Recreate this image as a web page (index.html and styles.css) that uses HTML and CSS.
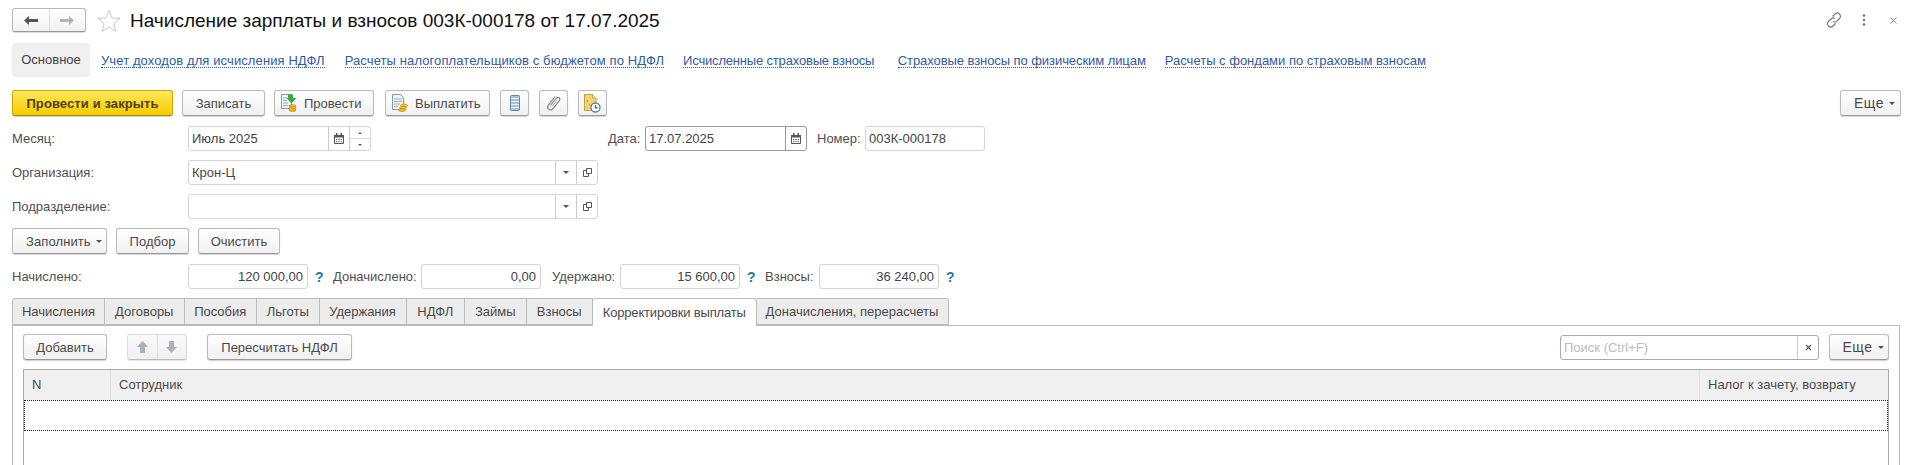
FILE: index.html
```html
<!DOCTYPE html>
<html lang="ru">
<head>
<meta charset="utf-8">
<title>Начисление зарплаты и взносов</title>
<link rel="stylesheet" href="styles.css">
</head>
<body>
<div class="page">
  <header class="header">
    <div class="nav">
      <span class="nav-cell"><svg width="14" height="9" viewBox="0 0 14 9"><path d="M0 4.500L5 0v3h9v3H5v3z" fill="#555"/></svg></span>
      <span class="nav-cell"><svg width="14" height="9" viewBox="0 0 14 9"><path d="M14 4.500L9 0v3H0v3h9v3z" fill="#b4b4b4"/></svg></span>
    </div>
    <svg class="star" width="24" height="23" viewBox="0 0 24 23"><path d="M12 1.500l3 7.400 8 .6-6.100 5.100 1.900 7.800L12 18.200l-6.800 4.200 1.900-7.800L1 9.500l8-.6z" fill="#fff" stroke="#c9c9c9"/></svg>
    <h1 class="title">Начисление зарплаты и взносов 003К-000178 от 17.07.2025</h1>
    <div class="win-icons">
      <svg width="16" height="16" viewBox="0 0 16 16"><g fill="none" stroke="#777" stroke-width="1.100"><path d="M6.500 4.500l2.500-2.500a3 3 0 0 1 4.500 4.500l-3 3a3 3 0 0 1-3.500 0"/><path d="M9.500 11.500l-2.500 2.500a3 3 0 0 1-4.500-4.500l3-3a3 3 0 0 1 3.500 0"/></g></svg>
      <svg width="4" height="12" viewBox="0 0 4 12"><g fill="#777"><circle cx="2" cy="1.500" r="1.300"/><circle cx="2" cy="6" r="1.300"/><circle cx="2" cy="10.500" r="1.300"/></g></svg>
      <svg width="7" height="7" viewBox="0 0 7 7"><path d="M.5 .5l6 6M6.500 .5l-6 6" stroke="#888"/></svg>
    </div>
  </header>

  <nav class="subnav">
    <span class="subnav-cur">Основное</span>
    <a class="link l1">Учет доходов для исчисления НДФЛ</a>
    <a class="link l2">Расчеты налогоплательщиков с бюджетом по НДФЛ</a>
    <a class="link l3">Исчисленные страховые взносы</a>
    <a class="link l4">Страховые взносы по физическим лицам</a>
    <a class="link l5">Расчеты с фондами по страховым взносам</a>
  </nav>

  <div class="toolbar">
    <button class="btn btn-primary w-post-close">Провести и закрыть</button>
    <button class="btn w-save">Записать</button>
    <button class="btn btn-icon w-post">
      <svg width="16" height="18" viewBox="0 0 16 18"><path d="M.5 .5h10v14H.5z" fill="#eef3f7" stroke="#8a9aa8"/><path d="M2 4h4M2 6.500h4M2 9h5M2 11.500h5" stroke="#9cb0c0"/><path d="M5 .5h5V4h3.500L8.500 9.500 3.500 4H5z" transform="translate(2 0)" fill="#3aa84a"/><ellipse cx="11.500" cy="12" rx="3.500" ry="1.500" fill="#f2c230" stroke="#b5891a" stroke-width=".6"/><ellipse cx="11.500" cy="14" rx="3.500" ry="1.500" fill="#f2c230" stroke="#b5891a" stroke-width=".6"/><ellipse cx="11.500" cy="16" rx="3.500" ry="1.500" fill="#eab420" stroke="#b5891a" stroke-width=".6"/></svg>
      <span>Провести</span>
    </button>
    <button class="btn btn-icon w-pay">
      <svg width="16" height="18" viewBox="0 0 16 18"><path d="M.5 .5h8l3 3v12H.5z" fill="#f2f5f8" stroke="#8a9aa8"/><path d="M2 5h8M2 7.500h8M2 10h6M2 12.500h4" stroke="#9cb0c0"/><ellipse cx="12" cy="11.500" rx="3.500" ry="1.500" fill="#f2c230" stroke="#b5891a" stroke-width=".6"/><ellipse cx="11" cy="13.800" rx="3.500" ry="1.500" fill="#f2c230" stroke="#b5891a" stroke-width=".6"/><ellipse cx="10" cy="16" rx="3.500" ry="1.500" fill="#eab420" stroke="#b5891a" stroke-width=".6"/></svg>
      <span>Выплатить</span>
    </button>
    <button class="btn w-icon gap-a">
      <svg width="10" height="16" viewBox="0 0 10 16"><rect x=".5" y=".5" width="9" height="15" rx="1" fill="#a9c3d8" stroke="#5f87a8"/><path d="M1 3.500h8M1 6.500h8M1 9.500h8M1 12.500h8" stroke="#e8f0f6" stroke-width="1.100"/></svg>
    </button>
    <button class="btn w-icon gap-b">
      <svg width="14" height="16" viewBox="0 0 14 16"><path d="M3.500 10.500l6-7.500a1.900 1.900 0 0 1 3 2.300L5.600 14a2.900 2.900 0 0 1-4.500-3.600L8.200 1.500" fill="none" stroke="#8a8a8a" stroke-width="1.200"/><path d="M5 11.500l5.500-6.800" stroke="#b5b5b5"/></svg>
    </button>
    <button class="btn w-icon gap-c">
      <svg width="17" height="19" viewBox="0 0 17 19"><path d="M.5 .5h8l3.500 3.500v12.500H.5z" fill="#f3d27a" stroke="#c89f3c"/><path d="M8.500 .5V4H12" fill="#fff6d8" stroke="#c89f3c"/><circle cx="3.500" cy="7" r=".8" fill="#b88f30"/><circle cx="6" cy="11" r=".8" fill="#b88f30"/><circle cx="11.500" cy="13.500" r="4.500" fill="#fff" stroke="#4f86b5" stroke-width="1.300"/><path d="M11.500 11v2.800h2.300" fill="none" stroke="#2f6f9f" stroke-width="1.300"/></svg>
    </button>
    <button class="btn btn-more w-more push"><span class="more-text">Еще</span><i class="caret"></i></button>
  </div>

  <div class="row row-1">
    <label class="lbl w-lbl">Месяц:</label>
    <div class="field w-month">
      <span class="val">Июль 2025</span>
      <span class="cell c21"><svg class="cal" width="10" height="11" viewBox="0 0 10 11"><path d="M.5 2.500h9v8h-9z" fill="#fff" stroke="#555"/><path d="M0 2h10v2.500H0zM2 0h1.500v2H2zM6.500 0H8v2H6.500z" fill="#555"/><path d="M2 6.500h1.300M4.300 6.500h1.300M6.700 6.500H8M2 8.700h1.300M4.300 8.700h1.300M6.700 8.700H8" stroke="#555"/></svg></span>
      <span class="spin"><span class="spin-up"><i class="tri-up"></i></span><span class="spin-down"><i class="tri-down"></i></span></span>
    </div>
    <label class="lbl date-lbl">Дата:</label>
    <div class="field field-active w-date">
      <span class="val">17.07.2025</span>
      <span class="cell c21 dark"><svg class="cal" width="10" height="11" viewBox="0 0 10 11"><path d="M.5 2.500h9v8h-9z" fill="#fff" stroke="#555"/><path d="M0 2h10v2.500H0zM2 0h1.500v2H2zM6.500 0H8v2H6.500z" fill="#555"/><path d="M2 6.500h1.300M4.300 6.500h1.300M6.700 6.500H8M2 8.700h1.300M4.300 8.700h1.300M6.700 8.700H8" stroke="#555"/></svg></span>
    </div>
    <label class="lbl num-lbl">Номер:</label>
    <div class="field w-num"><span class="val">003К-000178</span></div>
  </div>

  <div class="row row-2">
    <label class="lbl w-lbl">Организация:</label>
    <div class="field w-ref">
      <span class="val val-tight">Крон-Ц</span>
      <span class="cell c21"><i class="tri-down"></i></span>
      <span class="cell c21"><svg width="9" height="9" viewBox="0 0 9 9"><path d="M3.500 .5h5v5h-5z" fill="#fff" stroke="#555"/><path d="M3.500 2.500h-3v6h5V5.500" fill="none" stroke="#555"/></svg></span>
    </div>
  </div>

  <div class="row row-2">
    <label class="lbl w-lbl">Подразделение:</label>
    <div class="field w-ref">
      <span class="val val-tight"></span>
      <span class="cell c21"><i class="tri-down"></i></span>
      <span class="cell c21"><svg width="9" height="9" viewBox="0 0 9 9"><path d="M3.500 .5h5v5h-5z" fill="#fff" stroke="#555"/><path d="M3.500 2.500h-3v6h5V5.500" fill="none" stroke="#555"/></svg></span>
    </div>
  </div>

  <div class="toolbar toolbar-fill">
    <button class="btn btn-fill w-fill"><span class="fill-text">Заполнить</span><i class="caret"></i></button>
    <button class="btn w-pick">Подбор</button>
    <button class="btn w-clear">Очистить</button>
  </div>

  <div class="row row-totals">
    <label class="lbl w-lbl">Начислено:</label>
    <div class="field w-sum"><span class="val num">120 000,00</span></div>
    <a class="help">?</a>
    <label class="lbl lbl-don">Доначислено:</label>
    <div class="field w-sum"><span class="val num">0,00</span></div>
    <label class="lbl lbl-ud">Удержано:</label>
    <div class="field w-sum"><span class="val num">15 600,00</span></div>
    <a class="help">?</a>
    <label class="lbl lbl-vz">Взносы:</label>
    <div class="field w-sum"><span class="val num">36 240,00</span></div>
    <a class="help">?</a>
  </div>

  <div class="tabs">
    <span class="tab t1">Начисления</span>
    <span class="tab t2">Договоры</span>
    <span class="tab t3">Пособия</span>
    <span class="tab t4">Льготы</span>
    <span class="tab t5">Удержания</span>
    <span class="tab t6">НДФЛ</span>
    <span class="tab t7">Займы</span>
    <span class="tab t8">Взносы</span>
    <span class="tab tab-active t9">Корректировки выплаты</span>
    <span class="tab t10">Доначисления, перерасчеты</span>
  </div>

  <section class="panel">
    <div class="panel-bar">
      <button class="btn w-add">Добавить</button>
      <div class="btn-group">
        <span class="group-cell"><svg width="11" height="12" viewBox="0 0 11 12"><path d="M5.500 0L11 6H8v6H3V6H0z" fill="#a9b2b8"/></svg></span>
        <span class="group-cell"><svg width="11" height="12" viewBox="0 0 11 12"><path d="M5.500 12L11 6H8V0H3v6H0z" fill="#a9b2b8"/></svg></span>
      </div>
      <button class="btn w-recalc">Пересчитать НДФЛ</button>
      <div class="search">
        <span class="search-input">Поиск (Ctrl+F)</span>
        <span class="search-x"><svg width="7" height="7" viewBox="0 0 7 7"><path d="M1 1l5 5M6 1L1 6" stroke="#555" stroke-width="1.100"/></svg></span>
      </div>
      <button class="btn btn-more w-more2"><span class="more-text">Еще</span><i class="caret"></i></button>
    </div>
    <div class="grid">
      <div class="grid-head">
        <span class="col col-n">N</span>
        <span class="col col-emp">Сотрудник</span>
        <span class="col col-tax">Налог к зачету, возврату</span>
      </div>
      <div class="grid-row"></div>
    </div>
  </section>
</div>
</body>
</html>
```
FILE: styles.css
```css
* { box-sizing: border-box; }
html, body { margin: 0; padding: 0; background: #fff; }
body { font-family: "Liberation Sans", Arial, sans-serif; font-size: 13px; color: #4a4a4a; }
.page { width: 1913px; height: 465px; overflow: hidden; }

.header { display: flex; align-items: center; height: 40px; padding: 8px 0 8px 12px; }
.nav { display: flex; width: 74px; height: 24px; border: 1px solid #b8b8b8; border-bottom-color: #999; border-radius: 3px; background: linear-gradient(#fff, #f2f2f2); box-shadow: 0 1px 1px rgba(0,0,0,.15); }
.nav-cell { flex: 1; display: flex; align-items: center; justify-content: center; }
.nav-cell + .nav-cell { border-left: 1px solid #ddd; }
.star { margin-left: 11px; }
.title { margin: 1px 0 0 9px; font-size: 19px; font-weight: normal; color: #111; line-height: 24px; white-space: nowrap; }
.win-icons { margin-left: auto; display: flex; align-items: center; }
.win-icons svg:nth-child(1) { margin-right: 20px; }
.win-icons svg:nth-child(2) { margin-right: 24px; }
.win-icons svg:nth-child(3) { margin-right: 16px; }

.subnav { display: flex; align-items: center; height: 34px; margin: 3px 0 0 12px; }
.subnav-cur { width: 78px; height: 34px; line-height: 34px; text-align: center; background: #f0f0f0; border-radius: 3px; color: #444; }
.link { color: #2f5ca3; border-bottom: 1px dotted #2f5ca3; line-height: 13px; margin-top: 2px; white-space: nowrap; }
.l1 { margin-left: 11px; letter-spacing: .1px; }
.l2 { margin-left: 20px; letter-spacing: .1px; }
.l3 { margin-left: 19px; letter-spacing: -.18px; }
.l4 { margin-left: 23.500px; letter-spacing: -.07px; }
.l5 { margin-left: 19px; }

.toolbar { display: flex; height: 27px; margin: 13px 0 0 12px; }
.toolbar-fill { height: 26px; margin-top: 9px; }
.btn { display: flex; align-items: center; justify-content: center; gap: 6px; height: 26px; padding: 0; border: 1px solid #bbb; border-bottom-color: #9a9a9a; border-radius: 3px; background: linear-gradient(#fff, #f0f0f0); box-shadow: 0 1px 1px rgba(0,0,0,.18); font: inherit; color: #4a4a4a; white-space: nowrap; }
.btn-primary { background: linear-gradient(#ffe85a, #f6cb00); border-color: #c9a800; border-bottom-color: #a88c00; font-weight: bold; color: #4f4000; letter-spacing: .1px; }
.btn-icon { justify-content: flex-start; padding-left: 6px; gap: 7px; }
.btn-more { padding-left: 8px; }
.btn-fill { justify-content: flex-start; padding-left: 13px; gap: 6px; }
.more-text { font-size: 14px; letter-spacing: .5px; }
.fill-text { letter-spacing: .1px; }
.w-post-close { width: 161px; }
.w-save { width: 83px; margin-left: 9px; }
.w-post { width: 100px; margin-left: 9px; }
.w-pay { width: 105px; margin-left: 11px; }
.w-icon { width: 29px; }
.gap-a { margin-left: 10px; }
.gap-b { margin-left: 10px; }
.gap-c { margin-left: 10px; }
.w-more { width: 61px; margin-left: auto; margin-right: 12px; }
.caret { display: inline-block; width: 0; height: 0; border: 3px solid transparent; border-top: 3px solid #555; border-bottom: 0; margin-left: -1px; }

.row { display: flex; align-items: center; height: 25px; margin-left: 12px; }
.row-1 { margin-top: 9px; }
.row-2 { margin-top: 9px; }
.row-totals { margin-top: 10px; }
.lbl { color: #4f4f4f; white-space: nowrap; }
.w-lbl { width: 176px; }
.date-lbl { margin-left: 237px; width: 37px; }
.num-lbl { margin-left: 10px; width: 48px; }
.field { display: flex; align-items: stretch; height: 25px; border: 1px solid #d4d4d4; border-radius: 3px; background: #fff; }
.field-active { border-color: #999; }
.val { flex: 1; padding: 0 3px; line-height: 23px; color: #444; white-space: nowrap; }
.val-tight { padding-left: 3px; }
.num { text-align: right; padding-right: 4px; }
.cell { display: flex; align-items: center; justify-content: center; border-left: 1px solid #ccc; }
.cell.dark { border-left-color: #999; }
.c21 { width: 21px; }
.w-month { width: 183px; }
.w-date { width: 162px; }
.w-num { width: 120px; }
.w-ref { width: 410px; }
.w-sum { width: 120px; }
.spin { width: 21px; display: flex; flex-direction: column; border-left: 1px solid #ccc; }
.spin-up, .spin-down { flex: 1; display: flex; align-items: center; justify-content: center; }
.spin-down { border-top: 1px solid #ddd; }
.tri-down { display: block; width: 0; height: 0; border: 3px solid transparent; border-top: 3px solid #555; border-bottom: 0; }
.tri-up { display: block; width: 0; height: 0; border: 2px solid transparent; border-bottom: 2px solid #555; border-top: 0; }
.spin .tri-down { border-width: 2px; border-bottom: 0; }

.w-fill { width: 95px; }
.w-pick { width: 73px; margin-left: 9px; }
.w-clear { width: 82px; margin-left: 9px; }

.help { width: 25px; padding-left: 7px; font-weight: bold; color: #1f78a8; font-size: 14px; }
.lbl-don { width: 88px; }
.lbl-ud { margin-left: 11px; width: 68px; }
.lbl-vz { width: 54px; }

.tabs { display: flex; height: 28px; margin: 9px 0 0 12px; position: relative; z-index: 1; }
.tab { display: flex; align-items: center; justify-content: center; height: 27px; background: #ececec; border: 1px solid #bbb; border-left: 0; white-space: nowrap; color: #4a4a4a; }
.t1 { width: 93px; border-left: 1px solid #bbb; border-top-left-radius: 3px; }
.t2 { width: 79.500px; }
.t3 { width: 72.500px; }
.t4 { width: 62.500px; }
.t5 { width: 87px; }
.t6 { width: 58.500px; }
.t7 { width: 61.500px; }
.t8 { width: 66.500px; }
.t9 { width: 163.500px; letter-spacing: -.17px; }
.t10 { width: 192px; border-top-right-radius: 3px; }
.tab-active { height: 28px; background: #fff; border-bottom: 0; border-top-left-radius: 3px; border-top-right-radius: 3px; }

.panel { margin: -1px 13px 0 12px; height: 150px; border: 1px solid #bbb; padding: 8px 10px 0; }
.panel-bar { display: flex; height: 27px; align-items: flex-start; }
.w-add { width: 84px; }
.btn-group { display: flex; width: 60px; height: 26px; margin-left: 20px; border: 1px solid #ddd; border-bottom-color: #bbb; border-radius: 3px; background: linear-gradient(#fafafa, #f0f0f0); box-shadow: 0 1px 1px rgba(0,0,0,.1); }
.group-cell { flex: 1; display: flex; align-items: center; justify-content: center; }
.group-cell + .group-cell { border-left: 1px solid #ddd; }
.w-recalc { width: 145px; margin-left: 20px; }
.search { display: flex; width: 259px; height: 25px; margin: 1px 0 0 auto; border: 1px solid #aaa; border-radius: 3px; background: #fff; }
.search-input { flex: 1; padding: 0 3px; line-height: 23px; color: #bbb; }
.search-x { width: 21px; display: flex; align-items: center; justify-content: center; border-left: 1px solid #ccc; }
.w-more2 { width: 60px; margin-left: 10px; }

.grid { margin-top: 8px; height: 110px; border: 1px solid #aaa; }
.grid-head { display: flex; height: 30px; background: #f0f0f0; }
.col { line-height: 30px; padding-left: 8px; white-space: nowrap; color: #4a4a4a; }
.col-n { width: 87px; border-right: 1px solid #ddd; }
.col-emp { width: 1589px; border-right: 1px solid #ddd; }
.col-tax { flex: 1; }
.grid-row { height: 31px; border: 1px dotted #222; }
```
